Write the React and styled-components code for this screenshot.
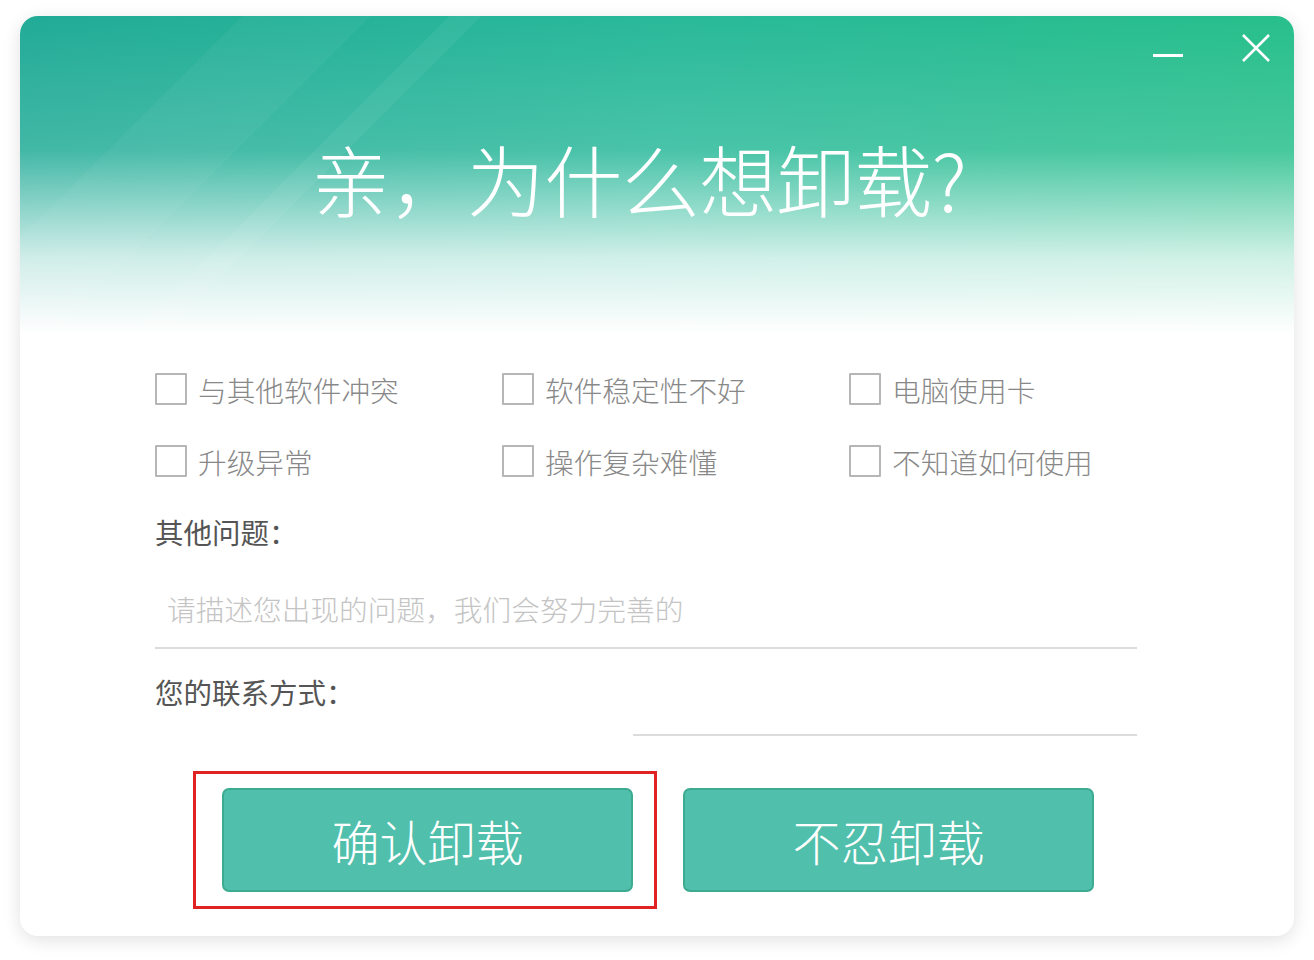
import React from 'react';
import styled, { createGlobalStyle } from 'styled-components';

const GlobalStyle = createGlobalStyle`
  html, body {
    margin: 0;
    padding: 0;
    background: #ffffff;
  }
  body {
    font-family: "Noto Sans CJK SC", "Noto Sans", sans-serif;
  }
`;

const Styled = {
  Page: styled.div`
    padding: 16px 20px 24px;
  `,

  Dialog: styled.div`
    width: 1274px;
    height: 920px;
    border-radius: 18px;
    background: #ffffff;
    box-shadow: 0 4px 18px rgba(0, 0, 0, 0.12);
    overflow: hidden;
    display: flex;
    flex-direction: column;
  `,

  Header: styled.header`
    height: 318px;
    display: flex;
    flex-direction: column;
    background:
      linear-gradient(to bottom, rgba(255, 255, 255, 0) 0%, rgba(255, 255, 255, 0.15) 42%, rgba(255, 255, 255, 0.78) 76%, #ffffff 100%),
      linear-gradient(135deg, rgba(255, 255, 255, 0) 14%, rgba(255, 255, 255, 0.035) 14%, rgba(255, 255, 255, 0.035) 22%, rgba(255, 255, 255, 0) 22%, rgba(255, 255, 255, 0) 27%, rgba(255, 255, 255, 0.05) 27%, rgba(255, 255, 255, 0.05) 29%, rgba(255, 255, 255, 0) 29%),
      linear-gradient(to right, #21ab97 0%, #29b99a 50%, #27bf8b 100%);
  `,

  Controls: styled.div`
    display: flex;
    justify-content: flex-end;
    align-items: center;
    gap: 56px;
    padding: 16px 22px 0 0;
    height: 32px;
  `,

  IconButton: styled.button`
    width: 32px;
    height: 32px;
    padding: 0;
    border: none;
    background: transparent;
    display: flex;
    align-items: center;
    justify-content: center;
    cursor: pointer;
  `,

  Title: styled.h1`
    margin: 64px 36px 0 0;
    text-align: center;
    color: #ffffff;
    font-size: 78px;
    font-weight: 300;
    line-height: 100px;
    letter-spacing: -0.5px;
  `,

  Body: styled.section`
    padding: 38px 0 0 135px;
    display: flex;
    flex-direction: column;
  `,

  Options: styled.div`
    display: grid;
    grid-template-columns: repeat(3, 347px);
    row-gap: 38px;
  `,

  Option: styled.label`
    display: flex;
    align-items: center;
    gap: 11px;
    height: 34px;
    font-size: 28.7px;
    font-weight: 300;
    color: #888888;
    cursor: pointer;
  `,

  Box: styled.span`
    width: 28px;
    height: 28px;
    border: 2px solid #b6b6b6;
    border-radius: 1px;
    background: #ffffff;
  `,

  Label: styled.div`
    font-size: 28.5px;
    color: #555555;
    height: 40px;
    line-height: 40px;
    margin-top: ${props => props.top}px;
  `,

  Field: styled.div`
    width: ${props => props.width}px;
    margin-left: ${props => props.offset || 0}px;
    height: ${props => props.height}px;
    border-bottom: 2px solid #dcdcdc;
    display: flex;
    align-items: flex-end;
    padding: 0 0 18px 12px;
    box-sizing: border-box;
    font-size: 28.7px;
    font-weight: 300;
    line-height: 40px;
    color: #c4c4c4;
  `,

  Actions: styled.div`
    display: flex;
    gap: 49px;
    margin: 52px 0 0 67px;
  `,

  Highlight: styled.div`
    padding: 14px 21px 14px 26px;
    margin: -17px -23px -17px -29px;
    border: 3px solid #e12222;
  `,

  Button: styled.button`
    width: 411px;
    height: 104px;
    border-radius: 7px;
    border: 2px solid #3daa92;
    background: #50bfab;
    color: #ffffff;
    font-family: "Noto Sans CJK SC", sans-serif;
    font-size: 48px;
    font-weight: 300;
    cursor: pointer;
  `
};

const options = [
  '与其他软件冲突',
  '软件稳定性不好',
  '电脑使用卡',
  '升级异常',
  '操作复杂难懂',
  '不知道如何使用'
];

const App = () => {
  return (
    <>
      <GlobalStyle />
      <Styled.Page>
        <Styled.Dialog>
          <Styled.Header>
            <Styled.Controls>
              <Styled.IconButton type="button" aria-label="minimize">
                <svg width="30" height="30" viewBox="0 0 30 30">
                  <rect x="0" y="21" width="30" height="3" fill="#ffffff" />
                </svg>
              </Styled.IconButton>
              <Styled.IconButton type="button" aria-label="close">
                <svg width="30" height="30" viewBox="0 0 30 30">
                  <path d="M2 2 L28 28 M28 2 L2 28" stroke="#ffffff" strokeWidth="2.6" />
                </svg>
              </Styled.IconButton>
            </Styled.Controls>
            <Styled.Title>亲，为什么想卸载?</Styled.Title>
          </Styled.Header>
          <Styled.Body>
            <Styled.Options>
              {options.map(text => (
                <Styled.Option key={text}>
                  <Styled.Box />
                  {text}
                </Styled.Option>
              ))}
            </Styled.Options>
            <Styled.Label top={34}>其他问题：</Styled.Label>
            <Styled.Field width={982} height={97}>请描述您出现的问题，我们会努力完善的</Styled.Field>
            <Styled.Label top={23}>您的联系方式：</Styled.Label>
            <Styled.Field width={504} height={24} offset={478} />
            <Styled.Actions>
              <Styled.Highlight>
                <Styled.Button type="button">确认卸载</Styled.Button>
              </Styled.Highlight>
              <Styled.Button type="button">不忍卸载</Styled.Button>
            </Styled.Actions>
          </Styled.Body>
        </Styled.Dialog>
      </Styled.Page>
    </>
  );
};

export default App;
